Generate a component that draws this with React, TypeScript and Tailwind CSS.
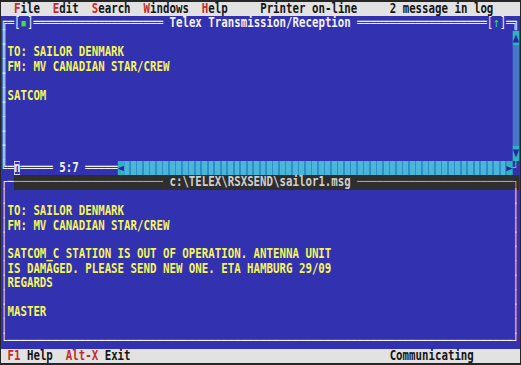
import React from 'react';

type Seg = [string, string?];

// colours of the text-mode screen
const W = 'text-[#f2f2f2]';
const Y = 'font-bold text-[#f5f55c]';
const G = 'text-[#3ee03e]';
const RED = 'text-[#c42a2a]';
const ARROW = 'bg-[#2fb2c0] text-[#2626a4]';
const VTRACK = 'bg-[#4379c6]';
const HTRACK =
  'bg-[image:repeating-linear-gradient(90deg,#4ab6da_0px,#4ab6da_6px,#2f8ec6_6px,#2f8ec6_8px)]';
const SHADOW = 'bg-[#2e2e2e] text-[#a4a4a4]';
const BOX = 'font-bold text-[#e8e8ff] shadow-[inset_0_0_0_1px_#dcdcf0]';

const sp = (n: number) => ' '.repeat(n);

const Row: React.FC<{ bg: string; segs: Seg[] }> = ({ bg, segs }) => (
  <div className={`flex h-[14.44px] leading-[14.44px] whitespace-pre ${bg}`}>
    {segs.map(([t, c], i) => (
      <span key={i} className={c ?? ''}>
        {t}
      </span>
    ))}
  </div>
);

const topLine = (text: string): Seg[] => [
  ['║', W],
  [text.padEnd(78), Y],
  [' ', VTRACK],
];

const bottomLine = (text: string): Seg[] => [
  ['│', W],
  [text.padEnd(78), Y],
  ['│', W],
];

const App: React.FC = () => {
  const menu = 'bg-[#e2e2e2] text-[#141414] font-bold';
  const blue = 'bg-[#3232b0]';

  const rows: { bg: string; segs: Seg[] }[] = [
    {
      bg: menu,
      segs: [
        [sp(2)],
        ['F', RED],
        ['ile  '],
        ['E', RED],
        ['dit  '],
        ['S', RED],
        ['earch  '],
        ['W', RED],
        ['indows  '],
        ['H', RED],
        ['elp'],
        [sp(5)],
        ['Printer on-line'],
        [sp(5)],
        ['2 message in log'],
        [sp(4)],
      ],
    },
    {
      bg: blue,
      segs: [
        ['╔', W],
        ['═', W],
        ['[', W],
        ['▪', G],
        [']', W],
        ['═'.repeat(20), W],
        [' Telex Transmission/Reception ', `${W} font-bold`],
        ['═'.repeat(20), W],
        ['[', W],
        ['↑', G],
        [']', W],
        ['═', W],
        ['╗', W],
      ],
    },
    { bg: blue, segs: [['║', W], [sp(78)], ['▲', ARROW]] },
    { bg: blue, segs: topLine('TO: SAILOR DENMARK') },
    { bg: blue, segs: topLine('FM: MV CANADIAN STAR/CREW') },
    { bg: blue, segs: topLine('') },
    { bg: blue, segs: topLine('SATCOM') },
    { bg: blue, segs: topLine('') },
    { bg: blue, segs: topLine('') },
    { bg: blue, segs: topLine('') },
    { bg: blue, segs: [['║', W], [sp(78)], ['▼', ARROW]] },
    {
      bg: blue,
      segs: [
        ['╚', W],
        ['═', W],
        ['n', BOX],
        ['═'.repeat(5), W],
        [' 5:7 ', `${W} font-bold`],
        ['═'.repeat(5), W],
        ['◄', ARROW],
        [sp(59), HTRACK],
        ['►', ARROW],
        ['┘', G],
      ],
    },
    {
      bg: blue,
      segs: [
        ['┌', W],
        ['─', W],
        ['─'.repeat(23), SHADOW],
        [' c:\\TELEX\\RSXSEND\\sailor1.msg ', `${SHADOW} font-bold text-[#cfcfcf]`],
        ['─'.repeat(24), SHADOW],
        ['┐', SHADOW],
      ],
    },
    { bg: blue, segs: bottomLine('') },
    { bg: blue, segs: bottomLine('TO: SAILOR DENMARK') },
    { bg: blue, segs: bottomLine('FM: MV CANADIAN STAR/CREW') },
    { bg: blue, segs: bottomLine('') },
    { bg: blue, segs: bottomLine('SATCOM_C STATION IS OUT OF OPERATION. ANTENNA UNIT') },
    { bg: blue, segs: bottomLine('IS DAMAGED. PLEASE SEND NEW ONE. ETA HAMBURG 29/09') },
    { bg: blue, segs: bottomLine('REGARDS') },
    { bg: blue, segs: bottomLine('') },
    { bg: blue, segs: bottomLine('MASTER') },
    { bg: blue, segs: bottomLine('') },
    { bg: blue, segs: [['└', W], ['─'.repeat(78), W], ['┘', W]] },
    {
      bg: menu,
      segs: [
        [' '],
        ['F1', RED],
        [' Help  '],
        ['Alt-X', RED],
        [' Exit'],
        [sp(40)],
        ['Communicating'],
        [sp(7)],
      ],
    },
  ];

  return (
    <div className="w-[521px] h-[365px] overflow-hidden bg-[#262626] pt-[2px] pl-[1px]">
      <div className="w-[640px] origin-top-left scale-x-[0.81094] font-['DejaVu_Sans_Mono',monospace] text-[13.288px]">
        {rows.map((r, i) => (
          <Row key={i} bg={r.bg} segs={r.segs} />
        ))}
      </div>
    </div>
  );
};

export default App;
